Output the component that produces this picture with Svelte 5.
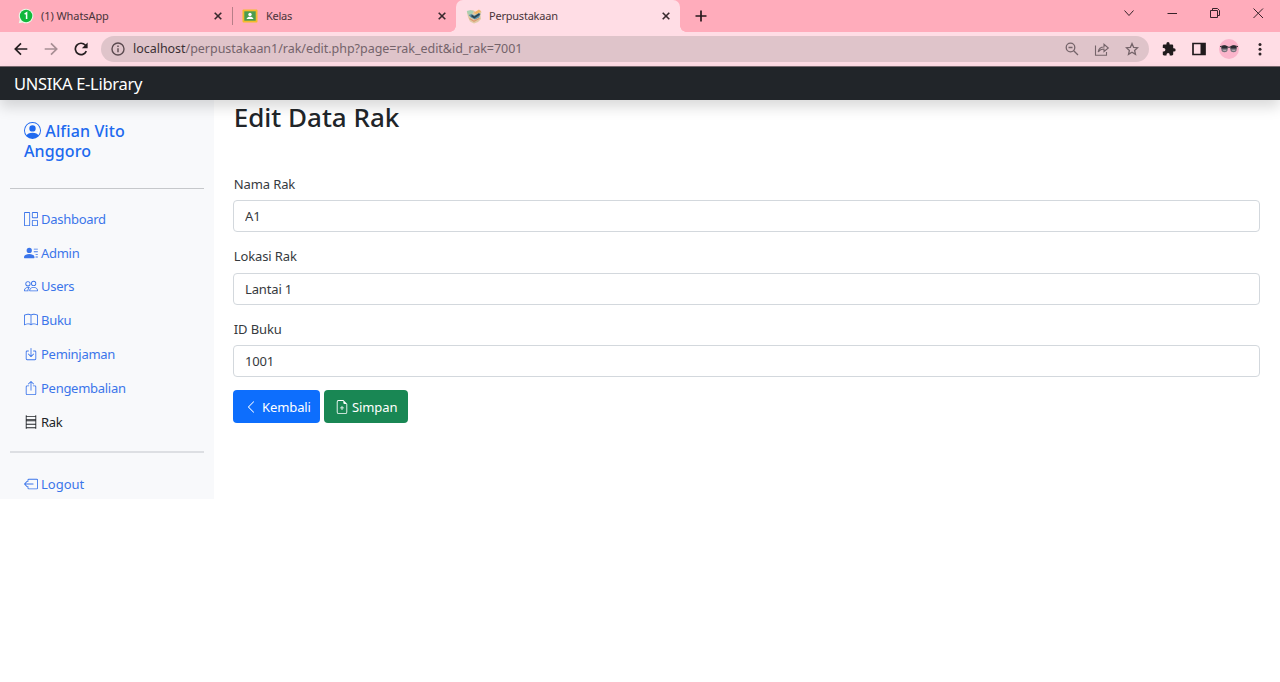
<script>
  const tabs = [
    { title: '(1) WhatsApp', icon: 'wa', cls: 'first' },
    { title: 'Kelas', icon: 'kelas', cls: 'second' },
    { title: 'Perpustakaan', icon: 'lib', cls: 'active' }
  ];

  const menu = [
    { label: 'Dashboard', icon: 'dashboard' },
    { label: 'Admin', icon: 'admin' },
    { label: 'Users', icon: 'users' },
    { label: 'Buku', icon: 'book' },
    { label: 'Peminjaman', icon: 'in' },
    { label: 'Pengembalian', icon: 'out' },
    { label: 'Rak', icon: 'rak', current: true }
  ];

  let fields = $state([
    { id: 'nama', label: 'Nama Rak', value: 'A1' },
    { id: 'lokasi', label: 'Lokasi Rak', value: 'Lantai 1' },
    { id: 'buku', label: 'ID Buku', value: '1001' }
  ]);

  // 16x16 glyph outlines
  const glyphs = {
    person:
      'M11 6a3 3 0 1 1-6 0 3 3 0 0 1 6 0z M0 8a8 8 0 1 1 16 0A8 8 0 0 1 0 8zm8-7a7 7 0 0 0-5.468 11.37C3.242 11.226 4.805 10 8 10s4.757 1.225 5.468 2.37A7 7 0 0 0 8 1z',
    dashboard:
      'M6 1v14H1V1h5zM1 0a1 1 0 0 0-1 1v14a1 1 0 0 0 1 1h5a1 1 0 0 0 1-1V1a1 1 0 0 0-1-1H1zm14 1v5h-5V1h5zm-5-1a1 1 0 0 0-1 1v5a1 1 0 0 0 1 1h5a1 1 0 0 0 1-1V1a1 1 0 0 0-1-1h-5zm5 10v5h-5v-5h5zm-5-1a1 1 0 0 0-1 1v5a1 1 0 0 0 1 1h5a1 1 0 0 0 1-1v-5a1 1 0 0 0-1-1h-5z',
    admin:
      'M6 8a3 3 0 1 0 0-6 3 3 0 0 0 0 6zm-5 6s-1 0-1-1 1-4 6-4 6 3 6 4-1 1-1 1H1zM11 3.5a.5.5 0 0 1 .5-.5h4a.5.5 0 0 1 0 1h-4a.5.5 0 0 1-.5-.5zm.5 2.5a.5.5 0 0 0 0 1h4a.5.5 0 0 0 0-1h-4zm2 3a.5.5 0 0 0 0 1h2a.5.5 0 0 0 0-1h-2zm0 3a.5.5 0 0 0 0 1h2a.5.5 0 0 0 0-1h-2z',
    users:
      'M15 14s1 0 1-1-1-4-5-4-5 3-5 4 1 1 1 1h8zm-7.978-1A.261.261 0 0 1 7 12.996c.001-.264.167-1.03.76-1.72C8.312 10.629 9.282 10 11 10c1.717 0 2.687.63 3.24 1.276.593.69.758 1.457.76 1.72l-.008.002a.274.274 0 0 1-.014.002H7.022zM11 7a2 2 0 1 0 0-4 2 2 0 0 0 0 4zm3-2a3 3 0 1 1-6 0 3 3 0 0 1 6 0zM6.936 9.28a5.88 5.88 0 0 0-1.23-.247A7.35 7.35 0 0 0 5 9c-4 0-5 3-5 4 0 .667.333 1 1 1h4.216A2.238 2.238 0 0 1 5 13c0-1.01.377-2.042 1.09-2.904.243-.294.526-.569.846-.816zM4.92 10A5.493 5.493 0 0 0 4 13H1c0-.26.164-1.03.76-1.724.545-.636 1.492-1.256 3.16-1.275zM1.5 5.5a3 3 0 1 1 6 0 3 3 0 0 1-6 0zm3-2a2 2 0 1 0 0 4 2 2 0 0 0 0-4z',
    book:
      'M1 2.828c.885-.37 2.154-.769 3.388-.893 1.33-.134 2.458.063 3.112.752v9.746c-.935-.53-2.12-.603-3.213-.493-1.18.12-2.37.461-3.287.811V2.828zm7.5-.141c.654-.689 1.782-.886 3.112-.752 1.234.124 2.503.523 3.388.893v9.923c-.918-.35-2.107-.692-3.287-.81-1.094-.111-2.278-.039-3.213.492V2.687zM8 1.783C7.015.936 5.587.81 4.287.94c-1.514.153-3.042.672-3.994 1.105A.5.5 0 0 0 0 2.5v11a.5.5 0 0 0 .707.455c.882-.4 2.303-.881 3.68-1.02 1.409-.142 2.59.087 3.223.877a.5.5 0 0 0 .78 0c.633-.79 1.814-1.019 3.222-.877 1.378.139 2.8.62 3.681 1.02A.5.5 0 0 0 16 13.5v-11a.5.5 0 0 0-.293-.455c-.952-.433-2.48-.952-3.994-1.105C10.413.809 8.985.936 8 1.783z',
    in: 'M3.5 4a1.5 1.5 0 0 0-1.5 1.5v8A1.5 1.5 0 0 0 3.5 15h9a1.5 1.5 0 0 0 1.5-1.5v-8A1.5 1.5 0 0 0 12.5 4h-2v1h2a.5.5 0 0 1 .5.5v8a.5.5 0 0 1-.5.5h-9a.5.5 0 0 1-.5-.5v-8a.5.5 0 0 1 .5-.5h2V4h-2zM7.646 11.354a.5.5 0 0 0 .708 0l3-3a.5.5 0 0 0-.708-.708L8.5 9.793V1.5a.5.5 0 0 0-1 0v8.293L5.354 7.646a.5.5 0 1 0-.708.708l3 3z',
    out: 'M3.5 6a.5.5 0 0 0-.5.5v8a.5.5 0 0 0 .5.5h9a.5.5 0 0 0 .5-.5v-8a.5.5 0 0 0-.5-.5h-2a.5.5 0 0 1 0-1h2A1.5 1.5 0 0 1 14 6.5v8a1.5 1.5 0 0 1-1.5 1.5h-9A1.5 1.5 0 0 1 2 14.5v-8A1.5 1.5 0 0 1 3.5 5h2a.5.5 0 0 1 0 1h-2zM7.646.146a.5.5 0 0 1 .708 0l3 3a.5.5 0 0 1-.708.708L8.5 1.707V10.5a.5.5 0 0 1-1 0V1.707L5.354 3.854a.5.5 0 1 1-.708-.708l3-3z',
    rak: 'M2.5 0a.5.5 0 0 1 .5.5V1h10V.5a.5.5 0 0 1 1 0v15a.5.5 0 0 1-1 0V15H3v.5a.5.5 0 0 1-1 0V.5a.5.5 0 0 1 .5-.5zM3 14h10v-3H3v3zm0-4h10V7H3v3zm0-4h10V5.500H3V6zm0-1.500h10V2H3v2.500z',
    logout:
      'M4 3.5A1.5 1.5 0 0 1 5.5 2h9A1.5 1.5 0 0 1 16 3.5v9a1.5 1.5 0 0 1-1.5 1.5h-9A1.5 1.5 0 0 1 4 12.5v-2h1v2a.5.5 0 0 0 .5.5h9a.5.5 0 0 0 .5-.5v-9a.5.5 0 0 0-.5-.5h-9a.5.5 0 0 0-.5.5v2H4v-2zM.146 8.354a.5.5 0 0 1 0-.708l3-3a.5.5 0 1 1 .708.708L1.707 7.5H10.5a.5.5 0 0 1 0 1H1.707l2.147 2.146a.5.5 0 0 1-.708.708l-3-3z',
    chevron:
      'M11.354 1.646a.5.5 0 0 1 0 .708L5.707 8l5.647 5.646a.5.5 0 0 1-.708.708l-6-6a.5.5 0 0 1 0-.708l6-6a.5.5 0 0 1 .708 0z',
    file: 'M8 6.5a.5.5 0 0 1 .5.5v1.5H10a.5.5 0 0 1 0 1H8.5V11a.5.5 0 0 1-1 0V9.5H6a.5.5 0 0 1 0-1h1.5V7a.5.5 0 0 1 .5-.5z M14 4.5V14a2 2 0 0 1-2 2H4a2 2 0 0 1-2-2V2a2 2 0 0 1 2-2h5.5L14 4.5zm-3 0A1.5 1.5 0 0 1 9.5 3V1H4a1 1 0 0 0-1 1v12a1 1 0 0 0 1 1h8a1 1 0 0 0 1-1V4.5h-2z'
  };
</script>

{#snippet glyph(name, size)}
  <svg class="glyph {name}" width={size} height={size} viewBox="0 0 16 16" fill="currentColor" fill-rule="evenodd"><path d={glyphs[name]} /></svg>
{/snippet}

<div class="window">
  <header class="strip">
    {#each tabs as tab}
      <div class="tab {tab.cls}">
        {#if tab.icon === 'wa'}
          <svg width="16" height="16" viewBox="0 0 16 16">
            <path d="M8 .7a7.3 7.3 0 1 1-3.500 13.700L.7 15.300l1-3.700A7.300 7.300 0 0 1 8 .7z" fill="#e9fbe9" />
            <circle cx="8.1" cy="8" r="6.200" fill="#12b83c" />
            <path d="M6.600 6.200 8.600 4.900V11" fill="none" stroke="#fff" stroke-width="1.500" />
          </svg>
        {:else if tab.icon === 'kelas'}
          <svg width="16" height="16" viewBox="0 0 16 16">
            <rect x=".5" y="1.5" width="15" height="13" rx="1" fill="#f3bb2a" />
            <rect x="2.3" y="3.3" width="11.4" height="9.4" fill="#4b9c50" />
            <circle cx="8" cy="6.5" r="1.7" fill="#fff" />
            <path d="M4.500 11c.6-1.700 1.900-2.200 3.500-2.200s2.900.5 3.500 2.200z" fill="#fff" />
          </svg>
        {:else}
          <svg width="16" height="16" viewBox="0 0 16 16">
            <path d="M1 4 7 2l3 2 4-2 1.500 2-1 3 .5 4-3 3-4 1.500-4-2L2 9z" fill="#dfcaa5" />
            <path d="m.8 3 4-1 3 1.500L6 6 2 6.500z" fill="#a9cfb1" />
            <path d="m7.500 5 5.500-3.500 2 2L11 6z" fill="#f0b565" />
            <path d="m2.500 7 3-1 3 1.500L13 5l1.500 1-1.500 3.500-4 2-4-2z" fill="#5b91aa" />
            <path d="m5.500 7.500 2.800 2L13.500 6" fill="none" stroke="#2b4450" stroke-width="1.600" />
            <path d="m3.500 10.500 4.500 2.800 5.500-3" fill="none" stroke="#dc9a70" stroke-width="1.200" />
          </svg>
        {/if}
        <span class="tab-title">{tab.title}</span>
        <svg class="close" width="8" height="8" viewBox="0 0 8 8"><path d="m.7.7 6.600 6.600M7.300.7.700 7.300" stroke="#38292d" stroke-width="1.600" /></svg>
      </div>
    {/each}
    <svg class="plus" width="12" height="12" viewBox="0 0 12 12"><path d="M6 .5v11M.5 6h11" stroke="#26191c" stroke-width="1.700" /></svg>
    <div class="controls">
      <svg width="12" height="12" viewBox="0 0 12 12"><path d="m1.500 3.500 4.500 5 4.500-5" /></svg>
      <svg width="12" height="12" viewBox="0 0 12 12"><path d="M1.500 6.500h9.500" /></svg>
      <svg width="12" height="12" viewBox="0 0 12 12"><path d="M1.500 3.500h7v7h-7zM3.500 3.500v-2h5l2 2v5h-2" /></svg>
      <svg width="12" height="12" viewBox="0 0 12 12"><path d="m1.500 1.500 9.500 9.500M11 1.500 1.500 11" /></svg>
    </div>
  </header>

  <div class="toolbar">
    <div class="nav">
      <svg width="14" height="14" viewBox="0 0 14 14" class="dark"><path d="M13.300 7H1.700M7 1.300 1.300 7 7 12.700" /></svg>
      <svg width="14" height="14" viewBox="0 0 14 14" class="dim"><path d="M.7 7h11.600M7 1.300 12.700 7 7 12.700" /></svg>
      <svg width="14" height="14" viewBox="0 0 14 14" class="dark"><path d="M12.300 9.200A5.700 5.700 0 1 1 11.200 3l1.300 1.500" /><path d="M13.600.5v5.700H7.900z" style:fill="currentColor" style:stroke="none" /></svg>
    </div>
    <div class="omnibox">
      <svg width="14" height="14" viewBox="0 0 14 14" fill="none" stroke="#5b4b50" stroke-width="1.400"><circle cx="7" cy="7" r="6" /><path d="M7 6.200v4M7 3.600v1.500" /></svg>
      <span class="url"><b>localhost</b>/perpustakaan1/rak/edit.php?page=rak_edit&amp;id_rak=7001</span>
      <div class="actions">
        <svg width="14" height="14" viewBox="0 0 14 14"><circle cx="5.5" cy="5.5" r="4.3" /><path d="m8.700 8.700 4.300 4.300M3.500 5.500h4" /></svg>
        <svg width="16" height="14" viewBox="0 0 16 14"><path d="M1.500 3.500v9.700h11V10M4.200 10c.5-3.500 2.500-5 5.800-5V2.300L14.300 6 10 9.500V7c-2.500 0-4.300.8-5.800 3z" stroke-width="1.100" /></svg>
        <svg width="14" height="14" viewBox="0 0 14 14"><path d="m7 1.600 1.600 3.700 4 .4-3 2.700.9 4L7 10.300l-3.500 2.100.9-4-3-2.700 4-.4z" /></svg>
      </div>
    </div>
    <div class="extras">
      <svg width="14" height="14" viewBox="0 0 14 14"><path d="M12 6.300h-.8V3.700c0-.7-.6-1.200-1.200-1.200H7.600v-.8a1.600 1.600 0 0 0-3.200 0v.8H2c-.7 0-1.200.5-1.200 1.200V6h.9a1.700 1.700 0 0 1 0 3.400H.8v2.900c0 .6.5 1.200 1.200 1.200h2.500v-.8a1.600 1.600 0 0 1 3.200 0v.8H10c.6 0 1.200-.6 1.200-1.200V9.600h.8a1.650 1.650 0 0 0 0-3.300z" fill="#211b1d" /></svg>
      <svg width="14" height="14" viewBox="0 0 14 14"><path d="M1 1.500h12v11H1z" fill="none" stroke="#211b1d" stroke-width="1.700" /><path d="M8.500 1.500H13v11H8.500z" fill="#211b1d" /></svg>
      <svg width="20" height="20" viewBox="0 0 20 20">
        <circle cx="10" cy="10" r="10" fill="#fbb5cb" />
        <path d="M1 7.700c2.500-1 5.500-1 9 .7 3.500-1.700 6.500-1.700 9-.7" stroke="#35333a" fill="none" />
        <circle cx="5.5" cy="10" r="3.2" fill="#77727b" /><circle cx="14.5" cy="10" r="3.2" fill="#77727b" />
        <path d="M2.300 9.500a3.200 3.200 0 0 1 6.400 0zM11.300 9.500a3.200 3.200 0 0 1 6.400 0z" fill="#2b2930" />
        <path d="M4.200 11.300h3M13.200 11.300h3" stroke="#c4b4bc" />
      </svg>
      <svg width="4" height="14" viewBox="0 0 4 14" fill="#2d2427"><circle cx="2" cy="2.5" r="1.5" /><circle cx="2" cy="7.2" r="1.5" /><circle cx="2" cy="11.9" r="1.5" /></svg>
    </div>
  </div>

  <nav class="brandbar"><span>UNSIKA E-Library</span></nav>

  <div class="body">
    <aside>
      <h5>{@render glyph('person', 17)} <span>Alfian Vito<br /></span>Anggoro</h5>
      <hr />
      <ul>
        {#each menu as item}
          <li class:current={item.current}>{@render glyph(item.icon, 14)}<span>{item.label}</span></li>
        {/each}
      </ul>
      <hr class="light" />
      <ul class="last"><li>{@render glyph('logout', 14)}<span>Logout</span></li></ul>
    </aside>
    <main>
      <h2>Edit Data Rak</h2>
      <form onsubmit={(e) => e.preventDefault()}>
        {#each fields as field}
          <div class="field">
            <label for={field.id}>{field.label}</label>
            <input id={field.id} bind:value={field.value} />
          </div>
        {/each}
        <div class="buttons">
          <button type="button" class="back">{@render glyph('chevron', 14)}<span>Kembali</span></button>
          <button type="submit" class="save">{@render glyph('file', 14)}<span>Simpan</span></button>
        </div>
      </form>
    </main>
  </div>
</div>

<style>
  :global(body) { margin: 0; background: #fff; }
  .window { width: 1280px; height: 682px; overflow: hidden; font-family: 'Noto Sans', 'Open Sans', sans-serif; background: #fff; }
  .window :global(*) { box-sizing: border-box; }
  svg { display: block; flex: none; }

  .strip { display: flex; align-items: center; height: 32px; background: #ffacbb; }
  .tab { display: flex; align-items: center; height: 32px; color: #49343a; font-size: 11px; white-space: nowrap; }
  .tab-title { margin: -2px 0 0 7px; letter-spacing: -0.22px; }
  .first .tab-title { letter-spacing: -0.08px; }
  .close { margin-left: auto; }
  .first { width: 232px; padding: 0 10.5px 0 18px; }
  .second { width: 224px; padding: 0 10.5px 0 10px; position: relative; }
  .second .tab-title { letter-spacing: -0.25px; margin-left: 8px; }
  .second::before { content: ''; position: absolute; left: 0; top: 7px; width: 1px; height: 18px; background: #b77e88; }
  .active { width: 224px; padding: 0 10.5px 0 10px; background: #ffdde5; border-radius: 7px 7px 0 0; position: relative; }
  .active::before, .active::after { content: ''; position: absolute; bottom: 0; width: 6px; height: 6px; }
  .active::before { left: -6px; background: radial-gradient(circle at 0 0, transparent 5.5px, #ffdde5 6px); }
  .active::after { right: -6px; background: radial-gradient(circle at 100% 0, transparent 5.5px, #ffdde5 6px); }
  .plus { margin-left: 15px; }
  .controls { display: flex; gap: 31px; margin: -6px 16px 0 auto; }
  .controls path { fill: none; stroke: #362329; stroke-width: 1; }

  .toolbar { display: flex; align-items: center; height: 34px; background: #ffdde5; padding: 0 18px 0 13.5px; }
  .nav { display: flex; gap: 16px; width: 87.5px; }
  .nav path { fill: none; stroke: currentColor; stroke-width: 1.7; }
  .dark { color: #251e20; }
  .dim { color: #a78e94; }
  .omnibox { display: flex; align-items: center; width: 1048px; height: 26px; padding: 0 10px; border-radius: 13px; background: #dfc4ca; }
  .url { margin-left: 8px; font-size: 12.5px; line-height: 20px; letter-spacing: -0.03px; color: #74636a; white-space: nowrap; }
  .url b { font-weight: 400; color: #3b3034; }
  .actions { display: flex; gap: 15px; margin-left: auto; }
  .actions svg { fill: none; stroke: #75646a; stroke-width: 1.3; }
  .extras { display: flex; align-items: center; margin-left: 13px; gap: 16px; }
  .extras svg:nth-child(3) { margin-left: -3px; }
  .extras svg:nth-child(4) { margin-left: 3px; }

  .brandbar { display: flex; align-items: center; height: 34px; padding-left: 14px; background: #212529; border-top: 1px solid #77676d; box-shadow: 0 7px 14px rgba(0, 0, 0, 0.15); color: #fff; font-size: 16.5px; letter-spacing: -0.3px; position: relative; z-index: 1; }
  .body { display: flex; align-items: flex-start; }
  aside { width: 213.5px; height: 399px; padding: 0 10px; background: #f8f9fb; overflow: hidden; color: #3b75ea; }
  h5 { margin: 21px 14px 27px; font-size: 16px; line-height: 20px; height: 40px; font-weight: 500; letter-spacing: 0.13px; color: #2069ef; white-space: nowrap; }
  h5 :global(.glyph) { display: inline-block; vertical-align: -2px; }
  hr { height: 1px; margin: 0; border: 0; background: #c6c8cb; }
  hr.light { height: 2px; background: #dddfe3; }
  ul { margin: 0; padding: 13px 0 12.5px 14px; list-style: none; font-size: 13px; letter-spacing: -0.28px; }
  ul.last { padding-top: 14px; letter-spacing: 0; }
  li { display: flex; align-items: center; height: 33.8px; gap: 3px; }
  .current { color: #212529; }
  main { flex: 1; padding: 0 0 0 19.5px; }
  h2 { margin: 0; height: 74.700px; padding-left: .7px; font-size: 26px; line-height: 34px; font-weight: 500; color: #212529; }
  .field { height: 72.6px; }
  label { display: block; height: 25.6px; padding-left: .8px; line-height: 18px; font-size: 13px; letter-spacing: -0.12px; color: #363a3e; }
  input { display: block; width: 1026.5px; height: 32px; padding: 0 11px; border: 1px solid #d3d8dd; border-radius: 4px; font: 13px 'Noto Sans', sans-serif; letter-spacing: -0.15px; color: #35393d; outline: none; }
  .buttons { display: flex; gap: 4px; padding-top: -1px; margin-top: -2px; }
  button { display: flex; align-items: center; height: 33px; padding: 0 11px; gap: 3px; border: 0; border-radius: 4px; font: 13px 'Noto Sans', sans-serif; letter-spacing: -0.1px; color: #fff; }
  .back { width: 87px; gap: 4px; background: #0d6efd; }
  .save { width: 84px; background: #198754; }
</style>
